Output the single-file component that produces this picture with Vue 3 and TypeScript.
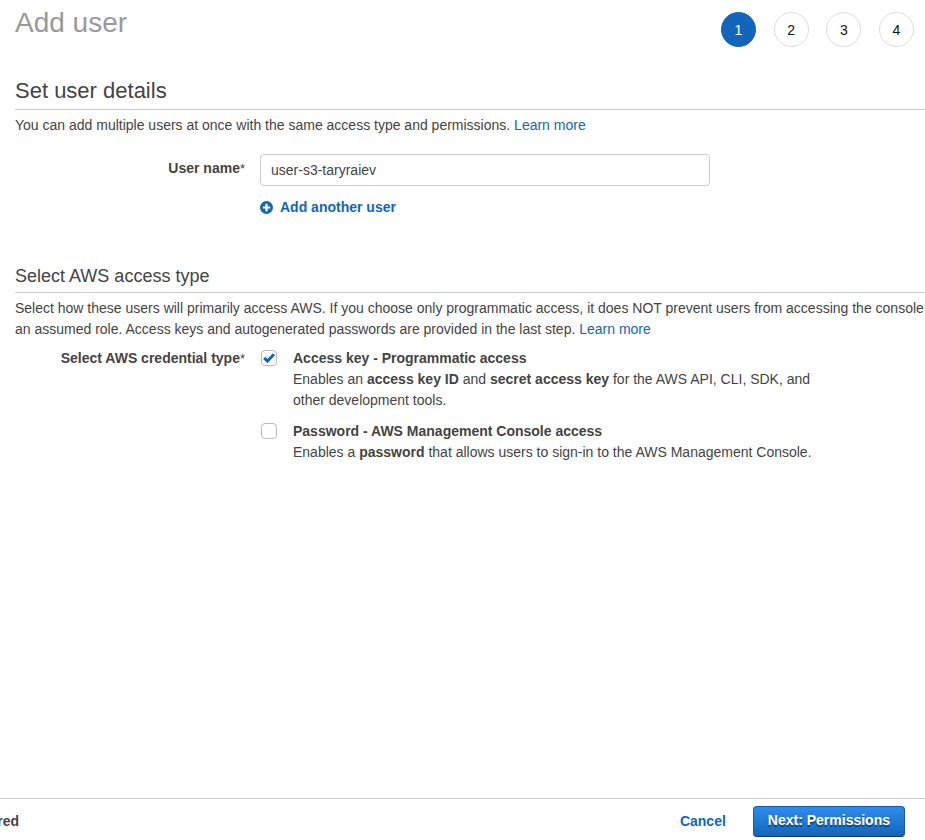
<script setup lang="ts">
import { ref } from 'vue'

const steps: number[] = [1, 2, 3, 4]
const currentStep = ref<number>(1)
const userName = ref<string>('user-s3-taryraiev')
const programmatic = ref<boolean>(true)
const consoleAccess = ref<boolean>(false)
</script>

<template>
  <div class="page">
    <header class="top">
      <h1>Add user</h1>
      <ol class="steps">
        <li v-for="step in steps" :key="step" class="step" :class="{ active: step === currentStep }">
          {{ step }}
        </li>
      </ol>
    </header>

    <main class="content">
      <section class="details">
        <h2>Set user details</h2>
        <p class="intro">
          You can add multiple users at once with the same access type and permissions.
          <a href="#">Learn more</a>
        </p>
        <div class="row name-row">
          <label class="row-label" for="user-name">User name<span class="star">*</span></label>
          <div class="field">
            <input id="user-name" v-model="userName" class="text-input" type="text" />
            <button class="add-user" type="button">
              <svg class="plus" viewBox="0 0 14 14" aria-hidden="true">
                <circle cx="6.5" cy="6.5" r="6.5" fill="#1166bb" />
                <path d="M6.5 2.8v7.4M2.8 6.5h7.4" stroke="#fff" stroke-width="2.2" />
              </svg>
              <span>Add another user</span>
            </button>
          </div>
        </div>
      </section>

      <section>
        <h3>Select AWS access type</h3>
        <p class="intro wide">
          Select how these users will primarily access AWS. If you choose only programmatic access, it does NOT prevent users from accessing the console<br />
          an assumed role. Access keys and autogenerated passwords are provided in the last step.
          <a href="#">Learn more</a>
        </p>
        <div class="row type-row" role="group" aria-labelledby="type-label">
          <div id="type-label" class="row-label">Select AWS credential type<span class="star">*</span></div>
          <div class="options">
            <div class="option">
              <input id="programmatic" v-model="programmatic" class="tick" type="checkbox" />
              <svg v-if="programmatic" class="tick-mark" viewBox="0 0 16 16" aria-hidden="true">
                <path d="M3.2 7.8L6.5 11L13 4.2" fill="none" stroke="#1166bb" stroke-width="3" />
              </svg>
              <label for="programmatic">
                <strong class="option-title">Access key - Programmatic access</strong>
                Enables an <strong>access key ID</strong> and <strong>secret access key</strong> for the AWS API, CLI, SDK, and other development tools.
              </label>
            </div>
            <div class="option">
              <input id="console-access" v-model="consoleAccess" class="tick" type="checkbox" />
              <svg v-if="consoleAccess" class="tick-mark" viewBox="0 0 16 16" aria-hidden="true">
                <path d="M3.2 7.8L6.5 11L13 4.2" fill="none" stroke="#1166bb" stroke-width="3" />
              </svg>
              <label for="console-access">
                <strong class="option-title">Password - AWS Management Console access</strong>
                Enables a <strong>password</strong> that allows users to sign-in to the AWS Management Console.
              </label>
            </div>
          </div>
        </div>
      </section>
    </main>

    <footer class="footer">
      <span class="note">red</span>
      <div class="actions">
        <button class="cancel" type="button">Cancel</button>
        <button class="next" type="button">Next: Permissions</button>
      </div>
    </footer>
  </div>
</template>

<style>
body {
  margin: 0;
  background: #fff;
}
</style>

<style scoped>
.page {
  box-sizing: border-box;
  display: flex;
  flex-direction: column;
  min-height: 100vh;
  overflow: hidden;
  color: #444;
  font-family: "Liberation Sans", Arial, sans-serif;
  font-size: 14px;
  line-height: 21px;
}

button,
input {
  font: inherit;
}

h1,
h2,
h3,
p,
ol {
  margin: 0;
  padding: 0;
  font-weight: normal;
}

a {
  color: #1166bb;
  text-decoration: none;
}

.top {
  display: flex;
  justify-content: space-between;
  align-items: flex-start;
  padding: 7px 11px 0 15px;
}

h1 {
  color: #999;
  font-size: 28px;
  line-height: 32px;
}

.steps {
  display: flex;
  justify-content: space-between;
  width: 193px;
  padding-top: 5px;
  list-style: none;
}

.step {
  box-sizing: border-box;
  width: 35px;
  height: 35px;
  border: 1px solid #ddd;
  border-radius: 50%;
  color: #111;
  line-height: 34px;
  text-align: center;
}

.step.active {
  border-color: #1166bb;
  background: #1166bb;
  color: #fff;
}

.content {
  flex: 1;
  padding: 30px 0 0 15px;
}

.details {
  padding-bottom: 46px;
}

h2 {
  padding-bottom: 4px;
  border-bottom: 1px solid #ccc;
  font-size: 22px;
  line-height: 28px;
}

h3 {
  padding-bottom: 4px;
  border-bottom: 1px solid #ccc;
  font-size: 18px;
  line-height: 24px;
}

.intro {
  padding-top: 5px;
}

.wide {
  white-space: nowrap;
}

.row {
  display: grid;
  grid-template-columns: 230px minmax(0, 555px);
  column-gap: 15px;
}

.name-row {
  padding-top: 18px;
}

.type-row {
  padding-top: 8px;
}

.row-label {
  font-weight: bold;
  text-align: right;
}

.name-row .row-label {
  padding-top: 4px;
}

.star {
  font-size: 13px;
  font-weight: normal;
}

.text-input {
  box-sizing: border-box;
  display: block;
  width: 100%;
  max-width: 450px;
  height: 32px;
  padding: 0 10px;
  border: 1px solid #ccc;
  border-radius: 4px;
  background: #fff;
  color: #444;
}

.add-user {
  display: flex;
  align-items: center;
  gap: 6px;
  margin-top: 11px;
  padding: 0;
  border: 0;
  background: none;
  color: #1166bb;
  font-weight: bold;
}

.plus {
  width: 14px;
  height: 14px;
}

.options {
  display: grid;
  gap: 10px;
}

.option {
  display: grid;
  grid-template-columns: 18px minmax(0, 1fr);
  column-gap: 15px;
}

.tick {
  grid-area: 1 / 1;
  box-sizing: border-box;
  width: 16px;
  height: 16px;
  margin: 2px 1px;
  border: 1px solid #bbb;
  border-radius: 4px;
  background: #fff;
  appearance: none;
}

.tick-mark {
  grid-area: 1 / 1;
  width: 16px;
  height: 16px;
  margin: 2px 1px;
  pointer-events: none;
}

.option label {
  grid-area: 1 / 2;
}

.option-title {
  display: block;
}

.footer {
  display: flex;
  justify-content: space-between;
  align-items: center;
  padding: 7px 20px 3px 0;
  border-top: 1px solid #ccc;
}

.note {
  display: flex;
  justify-content: flex-end;
  width: 19px;
  overflow: hidden;
  font-weight: bold;
}

.actions {
  display: flex;
  align-items: center;
  gap: 27px;
}

.cancel {
  padding: 0;
  border: 0;
  background: none;
  color: #1166bb;
  font-weight: bold;
}

.next {
  box-sizing: border-box;
  height: 31px;
  padding: 0 14px 2px;
  border: 1px solid #1a5aa0;
  border-bottom-color: #0d3b70;
  border-radius: 4px;
  background: linear-gradient(#2f8cec, #1166bb);
  color: #fff;
  font-weight: bold;
  line-height: 27px;
  text-shadow: 0 2px 1px rgba(0, 0, 0, 0.45);
}
</style>
